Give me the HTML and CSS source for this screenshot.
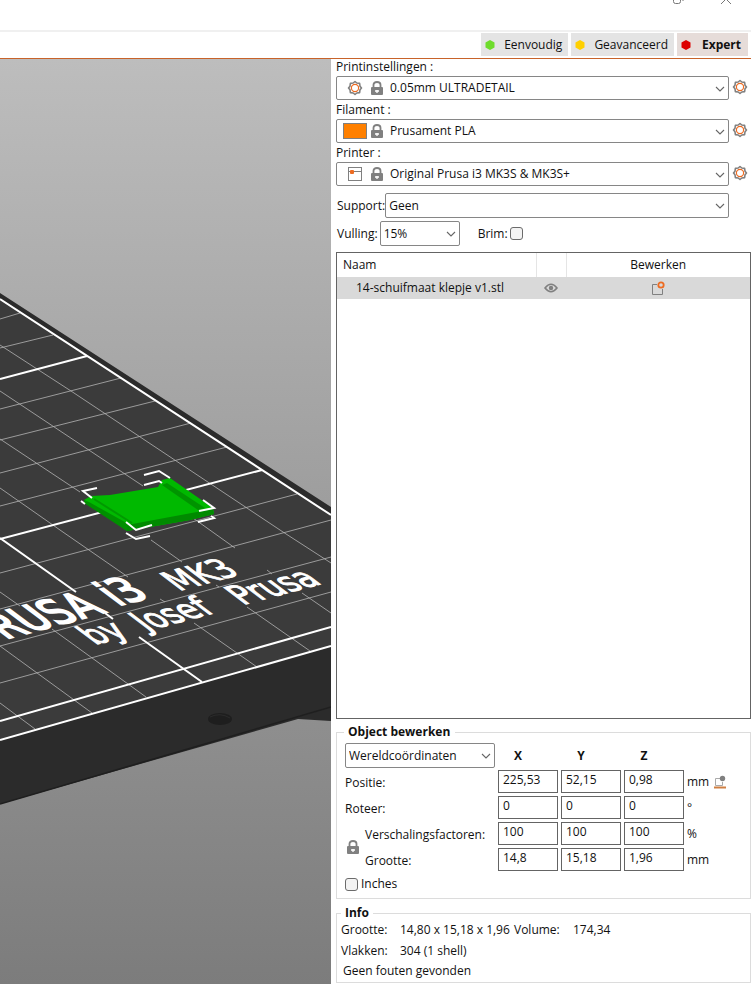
FILE: index.html
```
<!DOCTYPE html>
<html lang="nl">
<head>
    <meta charset="UTF-8">
    <meta name="viewport" content="width=device-width, initial-scale=1.0">
    <title>PrusaSlicer</title>
    <link rel="stylesheet" href="styles.css">
</head>
<body>
    <!-- Shared icons -->
    <svg class="sprite" aria-hidden="true">
        <symbol id="icon-chevron" viewBox="0 0 10 6">
            <path d="M1 1l4 4 4-4" fill="none" stroke="#666" stroke-width="1.1"/>
        </symbol>
        <symbol id="icon-gear" viewBox="0 0 16 16">
            <path d="M8 1.500L9.800 3 12.600 3.400 13 6.200 14.500 8 13 9.800 12.600 12.600 9.800 13 8 14.500 6.200 13 3.400 12.600 3 9.800 1.500 8 3 6.200 3.400 3.400 6.200 3z" fill="#fff" stroke="#808080" stroke-width="1.600" stroke-linejoin="round"/>
            <circle cx="8" cy="8" r="3.600" fill="none" stroke="#ed6b21" stroke-width="1.200"/>
        </symbol>
        <symbol id="icon-lock" viewBox="0 0 12 14">
            <path d="M2.500 7V3.800Q2.500 1 6 1t3.500 2.800V7" fill="none" stroke="#808080" stroke-width="1.800"/>
            <rect x="0" y="6" width="12" height="8" rx="1" fill="#808080"/>
            <path d="M4 10h4M6 9v3" stroke="#fff" stroke-width="1.300"/>
        </symbol>
        <symbol id="icon-printer" viewBox="0 0 14 14">
            <rect x=".5" y=".5" width="13" height="13" fill="#fff" stroke="#808080"/>
            <path d="M0 4.500h14" stroke="#808080"/>
            <rect x="2" y="3" width="4" height="4" rx="1" fill="#ed6b21"/>
        </symbol>
    </svg>

    <div class="titlebar">
        <button class="window-btn" aria-label="Herstellen">
            <svg width="12" height="12" viewBox="0 0 12 12"><path d="M.5 3.500h7v5q0 2-2 2h-3q-2 0-2-2zM3 1h5q2 0 2 2v5" fill="none" stroke="#777"/></svg>
        </button>
        <button class="window-btn" aria-label="Sluiten">
            <svg width="12" height="12" viewBox="0 0 12 12"><path d="M1 1l10 10M11 1L1 11" fill="none" stroke="#777"/></svg>
        </button>
    </div>

    <div class="modes">
        <button class="mode"><svg width="10" height="10" viewBox="0 0 10 10"><path d="M5 0l4.500 2.500v5L5 10 .5 7.500v-5z" fill="#6fdc2c"/></svg>Eenvoudig</button>
        <button class="mode"><svg width="10" height="10" viewBox="0 0 10 10"><path d="M5 0l4.500 2.500v5L5 10 .5 7.500v-5z" fill="#ffd000"/></svg>Geavanceerd</button>
        <button class="mode active"><svg width="10" height="10" viewBox="0 0 10 10"><path d="M5 0l4.500 2.500v5L5 10 .5 7.500v-5z" fill="#dd0000"/></svg>Expert</button>
    </div>

    <div class="workspace">
        <!-- 3D view of the print bed -->
        <div class="scene">
            <svg viewBox="0 59 331 925" preserveAspectRatio="xMaxYMin slice">
                <polygon points="0,293 331,507 331,721 298,719 0,804" fill="#2b2b2b"/>
                <path d="M0 804L331 707" stroke="#1f1f1f" stroke-width="1.500"/>
                <polygon points="0,299 331,515 331,646 0,740" fill="#3b3b3b"/>
                <ellipse cx="220" cy="719" rx="12" ry="6" fill="#1e1e1e"/>
                <path d="M210 717q10-5 20 1" fill="none" stroke="#2b2b2b"/>

                <g class="grid-thin">
                    <path d="M0 319L20 313M0 348L53 335M0 409L121 378M0 440L155 401M0 473L191 423M0 506L227 447M0 573L297 494M0 609L331 520M0 646L331 557M0 683L331 592"/>
                    <path d="M0 345L71 391L283 532L331 563"/>
                    <path d="M0 391L143 486M193 518L235 548M267 570L272 574M302 593L331 613"/>
                    <path d="M0 439L80 492M151 540L182 562M216 585L219 587M247 607L310 651"/>
                    <path d="M0 488L60 530L128 577M160 599L165 602M194 623L257 667"/>
                    <path d="M0 592L20 606M52 629L146 697M0 646L92 713M0 703L35 729"/>
                </g>
                <g class="grid-thick">
                    <path d="M0 299L331 515M0 740L331 646M0 721L331 627M0 379L87 356M0 539L262 470"/>
                    <path d="M0 538L76 592M105 613L113 619M139 637L202 682"/>
                </g>

                <g class="bed-text">
                    <text class="bed-name" text-anchor="end" transform="translate(107 612) rotate(-15) skewX(38)">PRUSA</text>
                    <text class="bed-name" transform="translate(118 606) rotate(-15) skewX(38)">i3</text>
                    <text class="bed-model" transform="translate(179 591) rotate(-15) skewX(38)">MK3</text>
                    <text class="bed-author" transform="translate(95 645) rotate(-15) skewX(38)">by</text>
                    <text class="bed-author" transform="translate(147 631) rotate(-15) skewX(38)">Josef</text>
                    <text class="bed-author" transform="translate(243 605) rotate(-15) skewX(38)">Prusa</text>
                </g>

                <!-- Selected object -->
                <polygon points="84,500 91,496 110,495 158,487 162,480 170,478 213,508 214,514 190,520 127,531" fill="#00b900"/>
                <polygon points="84,500 89,502 132,526 127,531 84,503" fill="#008f00"/>
                <polygon points="127,525 213,509 214,514 190,520 127,531" fill="#008a00"/>
                <polygon points="162,485 167,483 205,508 198,510" fill="#009400"/>
                <path d="M94 499L132 523" stroke="#009a00" stroke-width="2"/>
                <g class="selection">
                    <path d="M97 488L83 491L92 498M81 501L85 504M144 475L159 471L170 478M144 485L159 481L162 483M203 500L214 508L199 511M198 522L214 518L211 516M126 522L136 530L152 525M126 533L136 539L150 536"/>
                </g>
            </svg>
        </div>

        <div class="sidebar">
            <div class="presets">
                <label for="print-settings">Printinstellingen :</label>
                <div class="preset-row">
                    <div class="combo">
                        <select id="print-settings" class="preset"><option>0.05mm ULTRADETAIL</option></select>
                        <div class="combo-icons">
                            <svg class="kind" width="16" height="16"><use href="#icon-gear"/></svg>
                            <svg width="12" height="14"><use href="#icon-lock"/></svg>
                        </div>
                        <svg class="chevron"><use href="#icon-chevron"/></svg>
                    </div>
                    <button class="gear" aria-label="Printinstellingen bewerken"><svg width="16" height="16"><use href="#icon-gear"/></svg></button>
                </div>
                <label for="filament">Filament :</label>
                <div class="preset-row">
                    <div class="combo">
                        <select id="filament" class="preset"><option>Prusament PLA</option></select>
                        <div class="combo-icons">
                            <span class="swatch"></span>
                            <svg width="12" height="14"><use href="#icon-lock"/></svg>
                        </div>
                        <svg class="chevron"><use href="#icon-chevron"/></svg>
                    </div>
                    <button class="gear" aria-label="Filament bewerken"><svg width="16" height="16"><use href="#icon-gear"/></svg></button>
                </div>
                <label for="printer">Printer :</label>
                <div class="preset-row">
                    <div class="combo">
                        <select id="printer" class="preset"><option>Original Prusa i3 MK3S &amp; MK3S+</option></select>
                        <div class="combo-icons">
                            <svg class="kind" width="14" height="14"><use href="#icon-printer"/></svg>
                            <svg width="12" height="14"><use href="#icon-lock"/></svg>
                        </div>
                        <svg class="chevron"><use href="#icon-chevron"/></svg>
                    </div>
                    <button class="gear" aria-label="Printer bewerken"><svg width="16" height="16"><use href="#icon-gear"/></svg></button>
                </div>
            </div>

            <div class="option-row">
                <label for="support">Support:</label>
                <div class="combo">
                    <select id="support"><option>Geen</option></select>
                    <svg class="chevron"><use href="#icon-chevron"/></svg>
                </div>
            </div>
            <div class="option-row">
                <label for="infill">Vulling:</label>
                <div class="combo infill">
                    <select id="infill"><option>15%</option></select>
                    <svg class="chevron"><use href="#icon-chevron"/></svg>
                </div>
                <label for="brim" class="brim-label">Brim:</label>
                <input type="checkbox" id="brim">
            </div>

            <div class="object-list">
                <table>
                    <thead>
                        <tr><th class="col-name">Naam</th><th class="col-eye"></th><th class="col-edit">Bewerken</th></tr>
                    </thead>
                    <tbody>
                        <tr>
                            <td>14-schuifmaat klepje v1.stl</td>
                            <td class="icon-cell">
                                <svg width="14" height="10" viewBox="0 0 14 10"><path d="M1 5Q7-2.500 13 5 7 12.500 1 5z" fill="none" stroke="#808080" stroke-width="1.600"/><circle cx="7" cy="5" r="2.200" fill="#808080"/></svg>
                            </td>
                            <td class="icon-cell">
                                <svg width="14" height="14" viewBox="0 0 14 14"><path d="M6 3.500H1.500v10h10V8" fill="none" stroke="#808080"/><circle cx="10" cy="4" r="2.700" fill="none" stroke="#ed6b21" stroke-width="1.800"/></svg>
                            </td>
                        </tr>
                    </tbody>
                </table>
            </div>

            <fieldset class="object-edit">
                <legend>Object bewerken</legend>
                <div class="edit-grid">
                    <div class="combo coords">
                        <select aria-label="Coördinaten"><option>Wereldcoördinaten</option></select>
                        <svg class="chevron"><use href="#icon-chevron"/></svg>
                    </div>
                    <b>X</b><b>Y</b><b>Z</b><span></span>

                    <label for="pos-x">Positie:</label>
                    <input type="text" id="pos-x" value="225,53">
                    <input type="text" aria-label="Positie Y" value="52,15">
                    <input type="text" aria-label="Positie Z" value="0,98">
                    <span class="unit">mm
                        <button class="drop" aria-label="Op bed plaatsen">
                            <svg width="14" height="14" viewBox="0 0 14 14"><path d="M7 3.500H2.500v7h7V7" fill="none" stroke="#aaa"/><circle cx="9.500" cy="3.500" r="2.700" fill="#808080"/><path d="M1 12.500h12" stroke="#cf7f42" stroke-width="2"/></svg>
                        </button>
                    </span>

                    <label for="rot-x">Roteer:</label>
                    <input type="text" id="rot-x" value="0">
                    <input type="text" aria-label="Roteer Y" value="0">
                    <input type="text" aria-label="Roteer Z" value="0">
                    <span class="unit">°</span>

                    <div class="scale-labels">
                        <button class="lock" aria-label="Verhouding vergrendelen"><svg width="12" height="14"><use href="#icon-lock"/></svg></button>
                        <label for="scale-x">Verschalingsfactoren:</label>
                        <label for="size-x">Grootte:</label>
                    </div>
                    <input type="text" id="scale-x" value="100">
                    <input type="text" aria-label="Verschaling Y" value="100">
                    <input type="text" aria-label="Verschaling Z" value="100">
                    <span class="unit">%</span>

                    <input type="text" id="size-x" value="14,8">
                    <input type="text" aria-label="Grootte Y" value="15,18">
                    <input type="text" aria-label="Grootte Z" value="1,96">
                    <span class="unit">mm</span>
                </div>
                <div class="inches">
                    <input type="checkbox" id="inches">
                    <label for="inches">Inches</label>
                </div>
            </fieldset>

            <fieldset class="info">
                <legend>Info</legend>
                <div class="info-grid">
                    <span>Grootte:</span><span>14,80 x 15,18 x 1,96</span><span>Volume:</span><span>174,34</span>
                    <span>Vlakken:</span><span>304 (1 shell)</span>
                </div>
                <p>Geen fouten gevonden</p>
            </fieldset>
        </div>
    </div>
</body>
</html>
```
FILE: styles.css
```
* {
    margin: 0;
    padding: 0;
    box-sizing: border-box;
}

body {
    display: flex;
    flex-direction: column;
    min-height: 100vh;
    background-color: #fff;
    color: #111;
    font-family: "Open Sans", "Noto Sans", sans-serif;
    font-size: 12px;
    line-height: 16px;
}

button, input, select {
    font: inherit;
    color: inherit;
}

button {
    background: none;
    border: none;
}

svg {
    display: block;
}

.sprite {
    position: absolute;
    width: 0;
    height: 0;
}

/* Title bar */
.titlebar {
    display: flex;
    justify-content: flex-end;
    gap: 35px;
    height: 32px;
    padding-right: 19px;
    border-bottom: 2px solid #f0f0f0;
    overflow: hidden;
}

.window-btn {
    height: 12px;
    margin-top: -7px;
}

/* Mode buttons */
.modes {
    display: flex;
    justify-content: flex-end;
    gap: 3px;
    height: 27px;
    padding: 1px 3px 2px 0;
    border-bottom: 1px solid #c8632a;
}

.mode {
    display: flex;
    align-items: center;
    gap: 9px;
    padding: 0 6px 0 4px;
    background-color: #e4e4e4;
}

.mode.active {
    gap: 11px;
    padding-right: 7px;
    background-color: #e6dcd9;
    font-weight: bold;
}

.workspace {
    flex: 1;
    display: flex;
}

/* 3D scene */
.scene {
    flex: 1;
    min-width: 0;
    display: flex;
    background: linear-gradient(#bdbdbd, #7c7c7c);
    overflow: hidden;
}

.scene svg {
    width: 100%;
    height: 100%;
}

.grid-thin path {
    fill: none;
    stroke: #b4b4b4;
    stroke-width: 0.8px;
}

.grid-thick path {
    fill: none;
    stroke: #fff;
    stroke-width: 2px;
}

.bed-text {
    fill: #fff;
    stroke: #fff;
    stroke-width: 1px;
    font-family: "DejaVu Sans", sans-serif;
}

.bed-name {
    font-size: 38px;
    stroke-width: 2px;
}

.bed-model {
    font-size: 30px;
}

.bed-author {
    font-size: 30px;
}

.selection path {
    fill: none;
    stroke: #fff;
    stroke-width: 2px;
}

/* Sidebar */
.sidebar {
    width: 420px;
    display: flex;
    flex-direction: column;
    padding: 0 0 1px 5px;
}

.presets {
    display: flex;
    flex-direction: column;
    padding-bottom: 7px;
}

.presets label {
    height: 19px;
    padding-top: 2px;
}

.presets label:first-child {
    height: 17px;
    padding-top: 0;
}

.preset-row {
    display: flex;
    align-items: flex-start;
    gap: 3px;
    padding-right: 3px;
}

.gear {
    width: 16px;
    height: 16px;
    margin-top: 3px;
}

.combo {
    position: relative;
    flex: 1;
}

.combo select {
    display: block;
    width: 100%;
    height: 25px;
    padding: 0 20px 0 3px;
    border: 1px solid #868686;
    border-radius: 2px;
    background-color: #fff;
    appearance: none;
}

.combo select.preset {
    height: 24px;
    padding-left: 53px;
}

.combo-icons {
    position: absolute;
    left: 7px;
    top: 0;
    height: 100%;
    display: flex;
    align-items: center;
    gap: 4px;
    pointer-events: none;
}

.kind {
    width: 24px;
}

.swatch {
    width: 24px;
    height: 16px;
    border: 1px solid #808080;
    background-color: #ff8000;
}

.chevron {
    position: absolute;
    right: 4px;
    top: 10px;
    width: 10px;
    height: 6px;
    pointer-events: none;
}

.option-row {
    display: flex;
    align-items: center;
    padding: 0 22px 3px 1px;
}

.combo.infill {
    flex: none;
    width: 80px;
    margin-left: 2px;
}

.brim-label {
    margin: 0 2px 0 18px;
}

input[type="checkbox"] {
    width: 13px;
    height: 13px;
    border: 1px solid #6b6b6b;
    border-radius: 3px;
    background-color: #f3f3f3;
    appearance: none;
}

/* Object list */
.object-list {
    flex: 1;
    margin-top: 3px;
    border: 1px solid #646464;
}

.object-list table {
    width: 100%;
    table-layout: fixed;
    border-collapse: collapse;
}

.object-list th {
    height: 24px;
    font-weight: normal;
    border-right: 1px solid #e5e5e5;
}

.object-list th:last-child {
    border-right: none;
}

.object-list .col-name {
    padding-left: 6px;
    text-align: left;
}

.col-eye {
    width: 30px;
}

.col-edit {
    width: 184px;
}

.object-list td {
    height: 22px;
    padding-left: 19px;
    background-color: #d9d9d9;
}

.object-list .icon-cell {
    padding: 0;
}

.icon-cell svg {
    margin: 0 auto;
}

/* Object manipulation */
fieldset {
    border: 1px solid #dcdcdc;
}

legend {
    font-weight: bold;
}

.object-edit {
    margin-top: 5px;
    padding: 4px 8px 6px;
}

.object-edit legend {
    margin-left: -1px;
    padding: 0 5px 0 4px;
}

.edit-grid {
    display: grid;
    grid-template-columns: 150px 60px 60px 60px 1fr;
    grid-template-rows: 23px repeat(4, 23px);
    column-gap: 3px;
    row-gap: 3px;
    align-items: center;
}

.edit-grid b {
    padding-right: 20px;
    text-align: center;
}

.edit-grid label {
    padding-top: 2px;
}

.edit-grid input {
    width: 100%;
    height: 23px;
    padding: 0 4px 4px;
    border: 1px solid #646464;
    background-color: #fff;
}

.unit {
    display: flex;
    align-items: center;
    gap: 4px;
}

.scale-labels {
    grid-row: 4 / 6;
    display: grid;
    grid-template-columns: 20px 1fr;
    row-gap: 8px;
    align-items: center;
}

.lock {
    grid-row: 1 / 3;
    width: 16px;
    display: flex;
    justify-content: center;
}

.inches {
    display: flex;
    align-items: center;
    gap: 3px;
    margin-top: 5px;
}

.info {
    margin-top: 6px;
    padding: 1px 4px 3px;
}

.info legend {
    padding: 0 4px;
}

.info-grid {
    display: grid;
    grid-template-columns: 59px 114px 59px 1fr;
    row-gap: 5px;
}

.info p {
    margin-top: 4px;
    padding-left: 2px;
}
```
